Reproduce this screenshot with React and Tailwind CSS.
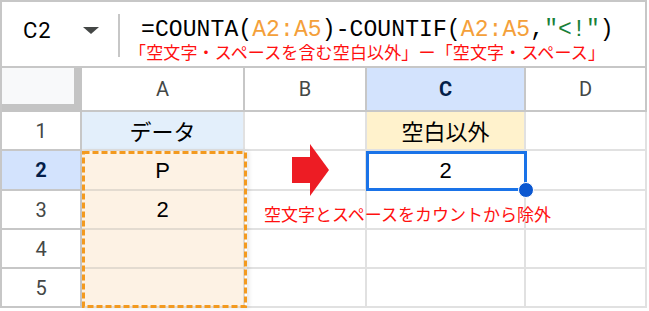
import React from "react";

const hdr = "border-r-2 border-b-2 border-[#c7c7c7] flex items-center justify-center";
const cell = "border-r-2 border-b-2 border-[#e1e1e1] flex items-center justify-center";

export default function App() {
  const rows = [1, 2, 3, 4, 5];
  return (
    <div className="relative w-[649px] h-[311px] bg-white overflow-hidden">
      <div className="w-[647px] border-t-2 border-l-2 border-[#c7c7c7]">
        {/* Formula bar */}
        <div className="h-[66px] border-r-2 border-b-2 border-[#c7c7c7] flex items-start">
          <div className="w-[60px] pl-[21px] pt-[16px] leading-[26px] text-[22px] tracking-[1px] text-black font-['Roboto',sans-serif]">
            C2
          </div>
          <div className="pt-[25px] ml-[21px]">
            <svg width="16" height="7" viewBox="0 0 16 7">
              <polygon points="0,0 16,0 8,7" fill="#444746" />
            </svg>
          </div>
          <div className="ml-[19px] mt-[12px] w-[2px] h-[43px] bg-[#c7c7c7]" />
          <div className="ml-[21px] pt-[17px] flex flex-col">
            <div className="leading-[22px] text-[23px] tracking-[0.1px] text-black font-['Liberation_Mono',monospace] whitespace-nowrap">
              =COUNTA(<span className="text-[#f4a03a]">A2:A5</span>)-COUNTIF(<span className="text-[#f4a03a]">A2:A5</span>,<span className="text-[#188038]">"&lt;!"</span>)
            </div>
            <div className="-ml-[12px] mt-[1px] leading-[20px] text-[17px] tracking-[0.15px] text-[#ff1010] font-['Noto_Sans_CJK_JP',sans-serif] whitespace-nowrap">
              「空文字・スペースを含む空白以外」ー「空文字・スペース」
            </div>
          </div>
        </div>

        {/* Grid */}
        <div className="grid grid-cols-[80px_163px_122px_159px_121px] grid-rows-[44px_39px_40px_39px_39px_39px] font-['Roboto',sans-serif]">
          <div className="bg-[#f8f9fa] border-r-8 border-b-8 border-[#c4c4c4]" />
          <div className={`${hdr} text-[20px] text-[#444746]`}>A</div>
          <div className={`${hdr} text-[20px] text-[#444746]`}>B</div>
          <div className={`${hdr} text-[20px] font-bold text-[#041e49] bg-[#d3e3fd]`}>C</div>
          <div className={`${hdr} text-[20px] text-[#444746]`}>D</div>

          {rows.map((r) => (
            <React.Fragment key={r}>
              <div
                className={`${hdr} text-[20px] ${
                  r === 2 ? "bg-[#d3e3fd] font-bold text-[#041e49]" : "text-[#444746]"
                }`}
              >
                {r}
              </div>
              <div
                className={`${cell} text-[22px] text-black ${
                  r === 1
                    ? "bg-[#e3effb] font-['Noto_Sans_CJK_JP',sans-serif]"
                    : "bg-[#fdf2e4] border-b-[#e3dbd0] border-r-[#e3dbd0] font-['Liberation_Sans',sans-serif]"
                }`}
              >
                {r === 1 ? "データ" : r === 2 ? "P" : r === 3 ? "2" : ""}
              </div>
              <div className={cell} />
              <div
                className={`${cell} text-[22px] text-black ${
                  r === 1
                    ? "bg-[#fff2cc] font-['Noto_Sans_CJK_JP',sans-serif]"
                    : "font-['Liberation_Sans',sans-serif]"
                }`}
              >
                {r === 1 ? "空白以外" : r === 2 ? "2" : ""}
              </div>
              <div className={cell} />
            </React.Fragment>
          ))}
        </div>
      </div>

      {/* Copy range dashed outline */}
      <div className="absolute left-[82px] top-[151px] w-[165px] h-[157px] shadow-[2px_0_4px_rgba(0,0,0,0.10)]">
        <svg width="165" height="157" className="block">
          <rect x="1.5" y="1.5" width="162" height="154" fill="none" stroke="#f39a1f" strokeWidth="3" strokeDasharray="6 3" />
        </svg>
      </div>

      {/* Selection */}
      <div className="absolute left-[366px] top-[151px] w-[161px] h-[40px] border-[3px] border-[#1a73e8]" />
      <div className="absolute left-[518px] top-[182px] w-[16px] h-[16px] rounded-full bg-[#0b57d0] border border-white" />

      {/* Red arrow */}
      <svg className="absolute left-[292px] top-[144px]" width="37" height="52" viewBox="0 0 37 52">
        <rect x="0" y="13" width="19" height="26" fill="#ed1c24" />
        <polygon points="18,0 37,26 18,52" fill="#ed1c24" />
      </svg>

      {/* Annotation */}
      <div className="absolute left-[264px] top-[203px] leading-[22px] text-[17px] text-[#ff1010] font-['Noto_Sans_CJK_JP',sans-serif] whitespace-nowrap">
        空文字とスペースをカウントから除外
      </div>
    </div>
  );
}
